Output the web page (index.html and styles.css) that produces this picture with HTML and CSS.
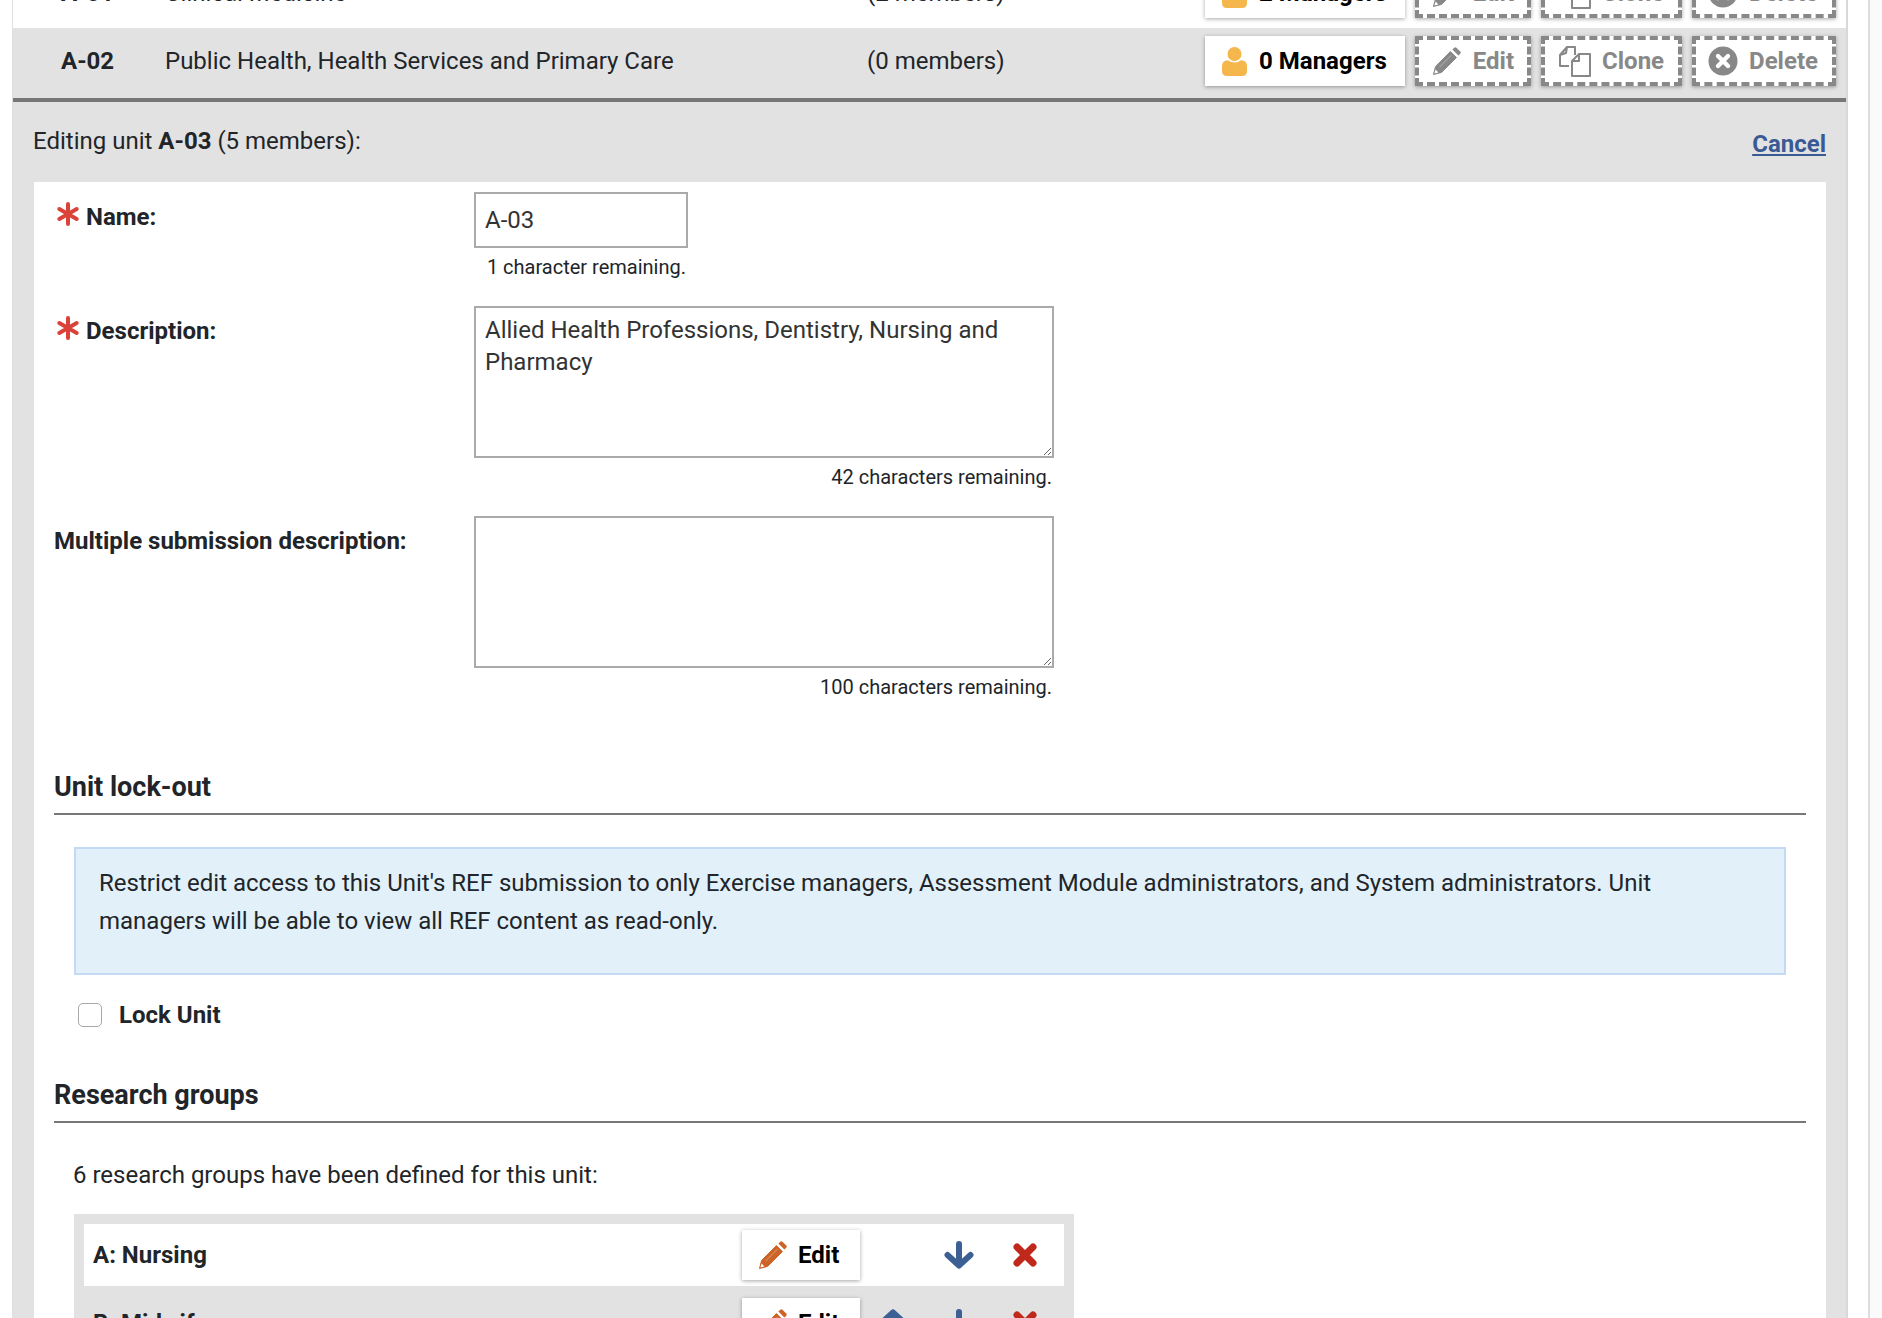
FILE: index.html
```html
<!DOCTYPE html>
<html lang="en">
<head>
<meta charset="utf-8">
<title>Units</title>
<link rel="stylesheet" href="styles.css">
</head>
<body>
<svg class="defs" width="0" height="0" aria-hidden="true">
  <symbol id="pencil" viewBox="0 0 30 30">
    <path d="M1.5 28.5 3.6 20.4 18.4 5.6 24.4 11.6 9.6 26.4Z" fill="currentColor" stroke="currentColor" stroke-linejoin="round"/>
    <path d="M20.4 3.6 22.3 1.7Q23.3 .8 24.4 1.7L28.3 5.6Q29.2 6.7 28.3 7.7L26.4 9.6Z" fill="currentColor"/>
    <path d="M2.4 27.6 3.6 23.6 6.4 26.4Z" fill="#fff"/>
    <path d="M7.6 21 19.4 9.2" stroke="#fff" stroke-opacity=".35" fill="none"/>
  </symbol>
  <symbol id="person" viewBox="0 0 25 29">
    <circle cx="12.5" cy="7" r="7" fill="currentColor"/>
    <path d="M0 24V19Q0 13.5 6 13.2 9 15.6 12.5 15.6 16 15.6 19 13.2 25 13.5 25 19V24Q25 29 20 29H5Q0 29 0 24Z" fill="currentColor"/>
  </symbol>
  <symbol id="clone" viewBox="0 0 34 34">
    <path d="M11 22H2V11L9 3 8 9 2 11M9 3H17V11" fill="none" stroke="currentColor" stroke-width="2" stroke-linejoin="round"/>
    <path d="M14 32V17L21 10H32V32Z" fill="#fff" stroke="currentColor" stroke-width="2" stroke-linejoin="round"/>
    <path d="M21 10V17H14" fill="none" stroke="currentColor" stroke-width="2" stroke-linejoin="round"/>
  </symbol>
  <symbol id="delete" viewBox="0 0 30 30">
    <circle cx="15" cy="15" r="14.5" fill="currentColor"/>
    <path d="M10 10 20 20M20 10 10 20" stroke="#fff" stroke-width="4.4" stroke-linecap="round"/>
  </symbol>
  <symbol id="down" viewBox="0 0 30 28">
    <path d="M15 3V24M3.500 14 15 24.500 26.500 14" fill="none" stroke="currentColor" stroke-width="6" stroke-linecap="round" stroke-linejoin="round"/>
  </symbol>
  <symbol id="up" viewBox="0 0 30 28">
    <path d="M15 25V4M3.500 14 15 3.500 26.500 14" fill="none" stroke="currentColor" stroke-width="6" stroke-linecap="round" stroke-linejoin="round"/>
  </symbol>
  <symbol id="cross" viewBox="0 0 24 24">
    <path d="M4 4 20 20M20 4 4 20" fill="none" stroke="currentColor" stroke-width="7" stroke-linecap="round"/>
  </symbol>
  <symbol id="star" viewBox="0 0 24 24">
    <path d="M12 2V22M3.300 7 20.700 17M20.700 7 3.300 17" fill="none" stroke="currentColor" stroke-width="4" stroke-linecap="round"/>
  </symbol>
</svg>

<div class="window">
  <main class="panel">
    <div class="unit-row">
      <span class="unit-code">A-01</span>
      <span class="unit-name">Clinical Medicine</span>
      <span class="unit-members">(2 members)</span>
      <div class="unit-actions">
        <a class="btn btn-managers"><svg class="ic-person"><use href="#person"/></svg>2 Managers</a>
        <a class="btn btn-dashed btn-edit"><svg class="ic-pencil"><use href="#pencil"/></svg>Edit</a>
        <a class="btn btn-dashed btn-clone"><svg class="ic-clone"><use href="#clone"/></svg>Clone</a>
        <a class="btn btn-dashed btn-delete"><svg class="ic-delete"><use href="#delete"/></svg>Delete</a>
      </div>
    </div>
    <div class="unit-row unit-row-alt">
      <span class="unit-code">A-02</span>
      <span class="unit-name">Public Health, Health Services and Primary Care</span>
      <span class="unit-members">(0 members)</span>
      <div class="unit-actions">
        <a class="btn btn-managers"><svg class="ic-person"><use href="#person"/></svg>0 Managers</a>
        <a class="btn btn-dashed btn-edit"><svg class="ic-pencil"><use href="#pencil"/></svg>Edit</a>
        <a class="btn btn-dashed btn-clone"><svg class="ic-clone"><use href="#clone"/></svg>Clone</a>
        <a class="btn btn-dashed btn-delete"><svg class="ic-delete"><use href="#delete"/></svg>Delete</a>
      </div>
    </div>

    <section class="editor">
      <header class="editor-head">
        <p class="editor-title">Editing unit <strong>A-03</strong> (5 members):</p>
        <a class="cancel" href="#">Cancel</a>
      </header>
      <div class="card">
        <div class="field field-short">
          <label class="field-label"><svg class="ic-star"><use href="#star"/></svg>Name:</label>
          <div class="field-control control-short">
            <input class="text-input" type="text" value="A-03">
            <p class="note">1 character remaining.</p>
          </div>
        </div>
        <div class="field field-long">
          <label class="field-label"><svg class="ic-star"><use href="#star"/></svg>Description:</label>
          <div class="field-control control-long">
            <textarea class="text-area">Allied Health Professions, Dentistry, Nursing and Pharmacy</textarea>
            <p class="note">42 characters remaining.</p>
          </div>
        </div>
        <div class="field field-long">
          <label class="field-label">Multiple submission description:</label>
          <div class="field-control control-long">
            <textarea class="text-area"></textarea>
            <p class="note">100 characters remaining.</p>
          </div>
        </div>

        <h3 class="section-title section-lock">Unit lock-out</h3>
        <div class="info">Restrict edit access to this Unit's REF submission to only Exercise managers, Assessment Module administrators, and System administrators. Unit managers will be able to view all REF content as read-only.</div>
        <label class="lock"><span class="check"></span>Lock Unit</label>

        <h3 class="section-title section-groups">Research groups</h3>
        <p class="groups-intro">6 research groups have been defined for this unit:</p>
        <div class="groups">
          <div class="group group-first">
            <span class="group-name">A: Nursing</span>
            <a class="btn btn-group"><svg class="ic-pencil ic-orange"><use href="#pencil"/></svg>Edit</a>
            <span class="slot"></span>
            <span class="slot"><svg class="ic-arrow"><use href="#down"/></svg></span>
            <span class="slot"><svg class="ic-cross"><use href="#cross"/></svg></span>
          </div>
          <div class="group">
            <span class="group-name">B: Midwifery</span>
            <a class="btn btn-group"><svg class="ic-pencil ic-orange"><use href="#pencil"/></svg>Edit</a>
            <span class="slot"><svg class="ic-arrow"><use href="#up"/></svg></span>
            <span class="slot"><svg class="ic-arrow"><use href="#down"/></svg></span>
            <span class="slot"><svg class="ic-cross"><use href="#cross"/></svg></span>
          </div>
        </div>
      </div>
    </section>
  </main>
  <div class="scroll-track"></div>
</div>
</body>
</html>
```
FILE: styles.css
```css
* { box-sizing: border-box; }
html, body { margin: 0; height: 100%; overflow: hidden; background: #fff; }
body { font-family: Roboto, "Liberation Sans", sans-serif; font-size: 24px; color: #212529; }
.defs { position: absolute; }

.window { display: flex; justify-content: space-between; height: 1318px; overflow: hidden; padding-left: 12px; }
.panel { width: 1836px; margin-top: -42px; border-left: 1px solid #e0e0e0; border-right: 2px solid #d8d8d8; background: #fff; flex: none; }
.scroll-track { width: 14px; background: #fafafa; border-left: 2px solid #dedede; flex: none; }

.unit-row { height: 70px; display: flex; align-items: center; padding: 0 10px 0 48px; background: #fff; }
.unit-row-alt { height: 74px; padding-bottom: 4px; background: #e2e2e2; border-bottom: 4px solid #777; }
.unit-code { width: 104px; font-weight: 700; }
.unit-name { width: 702px; }
.unit-members { flex: 1; }
.unit-actions { display: flex; gap: 10px; }

.btn { height: 50px; display: flex; align-items: center; background: #fff; font-weight: 700; color: #000; box-shadow: 0 1px 4px rgba(0,0,0,.35); }
.btn-managers { padding: 0 18px 0 17px; gap: 12px; }
.btn-dashed { border: 4px dashed #888; color: #888; font-weight: 700; }
.btn-edit { padding: 0 13px; gap: 11px; }
.btn-clone { padding: 0 14px 0 13px; gap: 10px; }
.btn-delete { padding: 0 14px 0 12px; gap: 11px; }
.btn-group { width: 118px; padding-left: 16px; gap: 10px; flex: none; }

.ic-person { width: 25px; height: 29px; color: #f5b64b; }
.ic-pencil { width: 30px; height: 30px; }
.ic-orange { color: #cc6428; }
.ic-clone { width: 34px; height: 34px; }
.ic-delete { width: 30px; height: 30px; }
.ic-arrow { width: 30px; height: 28px; color: #3c6094; display: block; }
.ic-cross { width: 24px; height: 24px; color: #c0281c; display: block; }
.ic-star { width: 24px; height: 24px; color: #d9433a; margin: 0 6px 0 2px; vertical-align: -1px; }

.editor { background: #e2e2e2; padding: 0 20px 40px 21px; }
.editor-head { height: 80px; display: flex; justify-content: space-between; align-items: center; padding: 0 5px 0 -1px; }
.editor-title { margin: 0 0 2px -1px; }
.cancel { color: #3a5a94; font-weight: 700; text-decoration: underline; margin-top: 4px; }

.card { background: #fff; padding: 10px 20px 0; }
.field { display: flex; }
.field-short { height: 114px; }
.field-long { height: 210px; }
.field-label { width: 420px; padding-top: 10px; line-height: 30px; font-weight: 700; flex: none; }
.field-control { display: flex; flex-direction: column; align-items: flex-end; }
.control-short { width: 214px; }
.control-long { width: 580px; }
.text-input { width: 100%; height: 56px; border: 2px solid #aaa; padding: 0 9px; font: 24px Roboto, sans-serif; color: #333; outline: none; }
.text-area { display: block; width: 100%; height: 152px; border: 2px solid #aaa; padding: 6px 9px; font: 24px/32px Roboto, sans-serif; color: #333; outline: none; }
.note { margin: 7px 2px 0 0; font-size: 20px; line-height: 24px; }

.section-title { margin: 0; height: 45px; font-size: 27px; line-height: 34px; font-weight: 700; border-bottom: 2px solid #777; }
.section-lock { margin-top: 44px; }
.section-groups { margin-top: 47px; }
.info { margin: 32px 20px 0; height: 128px; padding: 15px 23px; background: #e2f1f9; border: 2px solid #c4d9f5; line-height: 38px; }
.lock { display: flex; align-items: center; height: 32px; margin: 24px 0 0 24px; font-weight: 700; }
.check { width: 24px; height: 24px; border: 1px solid #a8a8a8; border-radius: 5px; margin-right: 17px; background: #fff; }
.groups-intro { margin: 36px 0 0 19px; line-height: 32px; }
.groups { width: 1000px; margin: 23px 0 0 20px; padding: 10px; background: #e2e2e2; }
.group { height: 62px; display: flex; align-items: center; padding-left: 9px; margin-bottom: 6px; }
.group-first { background: #fff; }
.group-name { width: 649px; font-weight: 700; flex: none; }
.slot { width: 66px; display: flex; justify-content: center; flex: none; }
```
